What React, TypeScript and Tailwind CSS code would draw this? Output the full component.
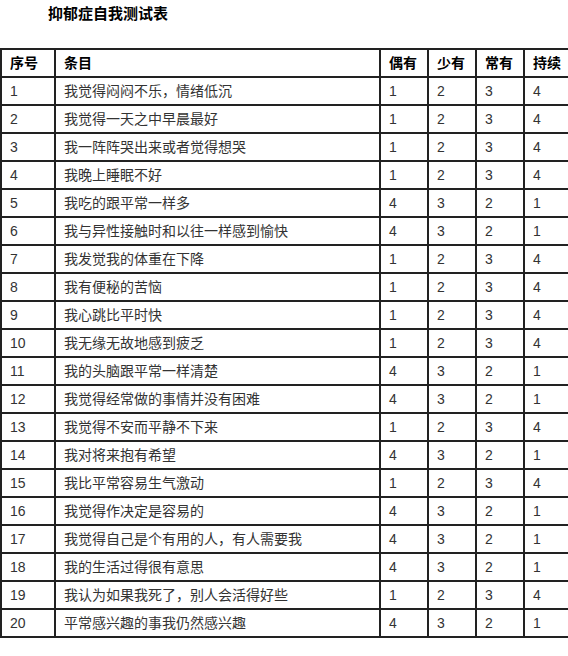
const rows: [string, number[]][] = [
  ['我觉得闷闷不乐，情绪低沉', [1, 2, 3, 4]],
  ['我觉得一天之中早晨最好', [1, 2, 3, 4]],
  ['我一阵阵哭出来或者觉得想哭', [1, 2, 3, 4]],
  ['我晚上睡眠不好', [1, 2, 3, 4]],
  ['我吃的跟平常一样多', [4, 3, 2, 1]],
  ['我与异性接触时和以往一样感到愉快', [4, 3, 2, 1]],
  ['我发觉我的体重在下降', [1, 2, 3, 4]],
  ['我有便秘的苦恼', [1, 2, 3, 4]],
  ['我心跳比平时快', [1, 2, 3, 4]],
  ['我无缘无故地感到疲乏', [1, 2, 3, 4]],
  ['我的头脑跟平常一样清楚', [4, 3, 2, 1]],
  ['我觉得经常做的事情并没有困难', [4, 3, 2, 1]],
  ['我觉得不安而平静不下来', [1, 2, 3, 4]],
  ['我对将来抱有希望', [4, 3, 2, 1]],
  ['我比平常容易生气激动', [1, 2, 3, 4]],
  ['我觉得作决定是容易的', [4, 3, 2, 1]],
  ['我觉得自己是个有用的人，有人需要我', [4, 3, 2, 1]],
  ['我的生活过得很有意思', [4, 3, 2, 1]],
  ['我认为如果我死了，别人会活得好些', [1, 2, 3, 4]],
  ['平常感兴趣的事我仍然感兴趣', [4, 3, 2, 1]],
];

const cell = 'border-2 border-[#222] h-[28px] pl-[8px] pr-0 py-0 align-middle';

export default function App() {
  return (
    <div className="w-[568px] h-[656px] bg-white font-['Liberation_Sans','Noto_Sans_CJK_SC',sans-serif] overflow-hidden">
      <div className="h-[48px] pl-[48px] pt-[4px]">
        <h1 className="text-[15px] leading-[20px] font-bold text-black">抑郁症自我测试表</h1>
      </div>
      <table className="table-fixed border-collapse w-[568px] text-[14px] text-[#333]">
        <colgroup>
          <col className="w-[54px]" />
          <col className="w-[325px]" />
          <col className="w-[48px]" />
          <col className="w-[48px]" />
          <col className="w-[48px]" />
          <col className="w-[45px]" />
        </colgroup>
        <thead>
          <tr className="font-bold text-black text-left">
            <th className={cell}>序号</th>
            <th className={cell}>条目</th>
            <th className={cell}>偶有</th>
            <th className={cell}>少有</th>
            <th className={cell}>常有</th>
            <th className={cell + ' pl-[6px]'}>持续</th>
          </tr>
        </thead>
        <tbody>
          {rows.map(([text, scores], i) => (
            <tr key={i}>
              <td className={cell}>{i + 1}</td>
              <td className={cell}>{text}</td>
              {scores.map((s, j) => (
                <td key={j} className={cell}>{s}</td>
              ))}
            </tr>
          ))}
        </tbody>
      </table>
    </div>
  );
}
